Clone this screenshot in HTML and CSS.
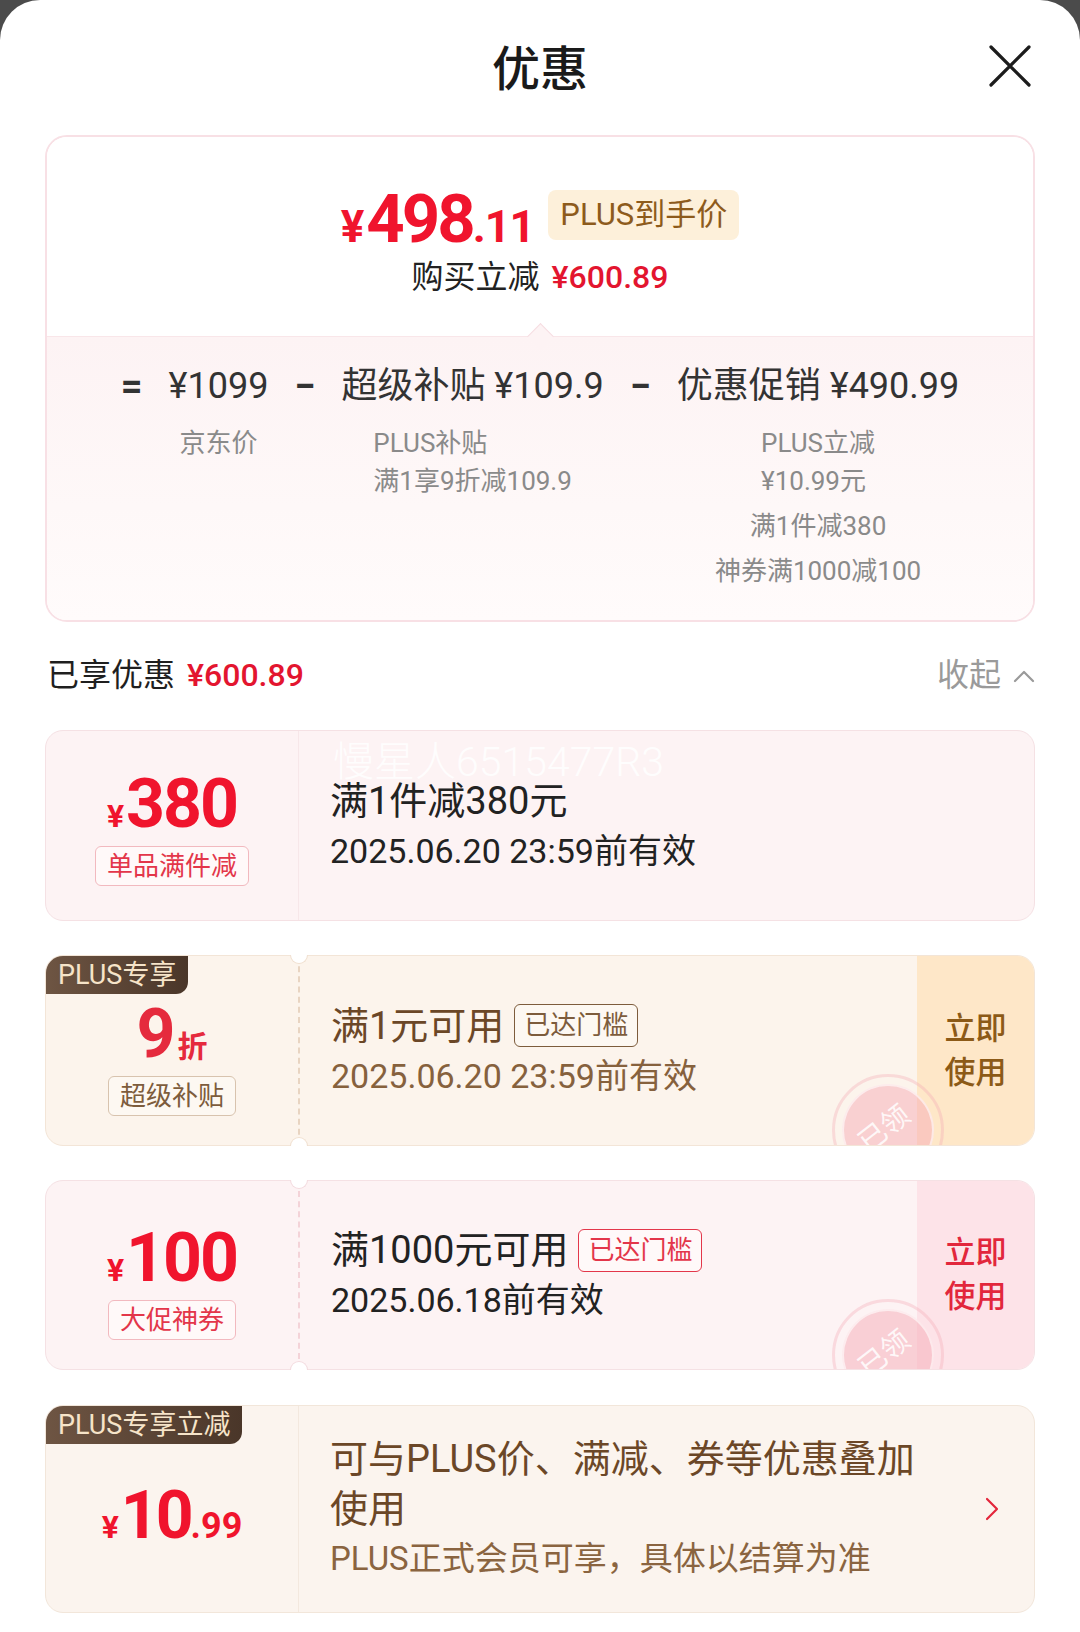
FILE: index.html
```html
<!DOCTYPE html>
<html lang="zh-CN">
<head>
<meta charset="utf-8">
<title>优惠</title>
<link rel="stylesheet" href="styles.css">
</head>
<body>
<div class="sheet">
  <header class="header">
    <div class="header-title">优惠</div>
    <button class="close" aria-label="关闭">
      <svg width="44" height="44" viewBox="0 0 44 44"><path d="M3 3L41 41M41 3L3 41" stroke="#1c1c1c" stroke-width="3.2" stroke-linecap="round"/></svg>
    </button>
  </header>

  <section class="summary">
    <div class="summary-top">
      <div class="final-row">
        <span class="final-price"><span class="fp-yen">¥</span><span class="fp-int">498</span><span class="fp-dec">.11</span></span>
        <span class="plus-badge">PLUS到手价</span>
      </div>
      <div class="save-row">购买立减<span class="save-amt">¥600.89</span></div>
    </div>
    <div class="summary-bottom">
      <div class="formula">
        <div class="op">=</div>
        <div class="term">
          <div class="term-main">¥1099</div>
          <div class="term-sub">
            <div class="sub-item">京东价</div>
          </div>
        </div>
        <div class="op">−</div>
        <div class="term">
          <div class="term-main">超级补贴 ¥109.9</div>
          <div class="term-sub">
            <div class="sub-item">PLUS补贴<br>满1享9折减109.9</div>
          </div>
        </div>
        <div class="op">−</div>
        <div class="term">
          <div class="term-main">优惠促销 ¥490.99</div>
          <div class="term-sub">
            <div class="sub-item">PLUS立减<br>¥10.99元</div>
            <div class="sub-item">满1件减380</div>
            <div class="sub-item">神券满1000减100</div>
          </div>
        </div>
      </div>
    </div>
  </section>

  <div class="enjoyed">
    <div class="enjoyed-left">已享优惠<span class="enjoyed-amt">¥600.89</span></div>
    <div class="collapse">收起
      <svg width="22" height="14" viewBox="0 0 22 14"><polyline points="2,12 11,3 20,12" fill="none" stroke="#9a9a9a" stroke-width="2.2" stroke-linecap="round" stroke-linejoin="round"/></svg>
    </div>
  </div>

  <div class="coupon-list">
    <div class="coupon coupon-pink h191">
      <div class="coupon-clip">
        <div class="cp-left pad-4">
          <div class="cp-amount red"><span class="cp-yen">¥</span><span class="cp-num">380</span></div>
          <div class="cp-tag tag-red">单品满件减</div>
        </div>
        <div class="cp-body div-faint-pink">
          <div class="cp-title">满1件减380元</div>
          <div class="cp-date">2025.06.20 23:59前有效</div>
        </div>
        <div class="watermark">慢星人6515477R3</div>
      </div>
    </div>

    <div class="coupon coupon-cream h191">
      <div class="coupon-clip">
        <div class="corner-badge">PLUS专享</div>
        <div class="cp-left pad-12">
          <div class="cp-amount discount"><span class="cp-num">9</span><span class="cp-unit">折</span></div>
          <div class="cp-tag tag-brown">超级补贴</div>
        </div>
        <div class="cp-body div-brown">
          <div class="cp-title brown-title">满1元可用<span class="title-tag tag-brown">已达门槛</span></div>
          <div class="cp-date brown-date">2025.06.20 23:59前有效</div>
        </div>
        <div class="cp-action action-gold">立即<br>使用</div>
        <div class="stamp"><span class="stamp-text">已领</span></div>
      </div>
      <span class="notch notch-top notch-brown"></span>
      <span class="notch notch-bottom notch-brown"></span>
    </div>

    <div class="coupon coupon-pink h190">
      <div class="coupon-clip">
        <div class="cp-left pad-12">
          <div class="cp-amount red"><span class="cp-yen">¥</span><span class="cp-num">100</span></div>
          <div class="cp-tag tag-red">大促神券</div>
        </div>
        <div class="cp-body div-pink">
          <div class="cp-title">满1000元可用<span class="title-tag tag-red">已达门槛</span></div>
          <div class="cp-date">2025.06.18前有效</div>
        </div>
        <div class="cp-action action-red">立即<br>使用</div>
        <div class="stamp"><span class="stamp-text">已领</span></div>
      </div>
      <span class="notch notch-top notch-pink"></span>
      <span class="notch notch-bottom notch-pink"></span>
    </div>

    <div class="coupon coupon-cream2 h208">
      <div class="coupon-clip">
        <div class="corner-badge">PLUS专享立减</div>
        <div class="cp-left pad-20">
          <div class="cp-amount red"><span class="cp-yen">¥</span><span class="cp-num num-sm">10</span><span class="cp-dec">.99</span></div>
        </div>
        <div class="cp-body div-faint-cream">
          <div class="cp-title brown-title wrap-title">可与PLUS价、满减、券等优惠叠加使用</div>
          <div class="cp-date brown-sub">PLUS正式会员可享，具体以结算为准</div>
        </div>
        <div class="cp-arrow">
          <svg width="14" height="24" viewBox="0 0 14 24"><polyline points="2,2 12,12 2,22" fill="none" stroke="#e3263b" stroke-width="2.2" stroke-linecap="round" stroke-linejoin="round"/></svg>
        </div>
      </div>
    </div>
  </div>
</div>
</body>
</html>
```

FILE: styles.css
```css
* { box-sizing: border-box; margin: 0; padding: 0; }
html { background: #4b4b4b; }
body {
  margin: 0;
  width: 1080px;
  height: 1632px;
  overflow: hidden;
  font-family: Roboto, "Noto Sans CJK SC", sans-serif;
  color: #222;
}
.sheet {
  background: #fff;
  border-radius: 40px 40px 0 0;
  height: 1632px;
  padding: 0 45px;
}

/* header */
.header {
  height: 135px;
  display: grid;
  grid-template-columns: 1fr auto 1fr;
  align-items: center;
}
.header-title {
  grid-column: 2;
  font-family: "Noto Sans CJK SC", sans-serif;
  font-size: 48px;
  font-weight: 500;
  color: #1a1a1a;
  line-height: 1;
  margin-top: -6px;
}
.close {
  grid-column: 3;
  justify-self: end;
  background: none;
  border: 0;
  width: 44px;
  height: 44px;
  margin-right: 3px;
  margin-top: -3px;
  display: flex;
}

/* summary card */
.summary {
  border: 2px solid #f8e0e5;
  border-radius: 22px;
  height: 487px;
  overflow: hidden;
  display: flex;
  flex-direction: column;
}
.summary-top {
  height: 199px;
  flex: none;
  padding-top: 46px;
  display: flex;
  flex-direction: column;
  align-items: center;
  background: #fff;
}
.final-row {
  height: 64px;
  display: flex;
  align-items: center;
  gap: 14px;
}
.final-price {
  display: flex;
  align-items: baseline;
  color: #f0142d;
  font-weight: 700;
  line-height: 1;
  white-space: nowrap;
  margin-top: 8px;
}
.fp-yen { font-size: 44px; margin-right: 2px; }
.fp-int { font-size: 67px; letter-spacing: -3px; }
.fp-dec { font-size: 45px; letter-spacing: -1px; }
.plus-badge {
  height: 50px;
  line-height: 50px;
  padding: 0 12px;
  border-radius: 8px;
  background: #fdf0da;
  color: #8d5b1c;
  font-size: 31px;
}
.save-row {
  margin-top: 10px;
  font-size: 32px;
  line-height: 40px;
  color: #222;
}
.save-amt {
  color: #e3152f;
  font-weight: 500;
  margin-left: 12px;
}

.summary-bottom {
  flex: 1;
  position: relative;
  border-top: 1px solid #f9e6e9;
  background: linear-gradient(180deg, #fdf3f4 0%, #fef8f8 60%, #fffbfb 100%);
}
.summary-bottom::before {
  content: "";
  position: absolute;
  left: calc(50% - 9px);
  top: -10px;
  width: 18px;
  height: 18px;
  background: #fdf3f4;
  border-left: 1px solid #f6dde2;
  border-top: 1px solid #f6dde2;
  transform: rotate(45deg);
}
.formula {
  display: flex;
  justify-content: center;
  gap: 26px;
  padding-top: 27px;
}
.op, .term-main {
  font-size: 35px;
  line-height: 44px;
  font-weight: 400;
  color: #333;
  white-space: nowrap;
}
.op { font-weight: 700; font-size: 38px; }
.term {
  display: flex;
  flex-direction: column;
  align-items: center;
}
.term-main { font-size: 36px; }
.term-sub {
  margin-top: 16px;
  display: flex;
  flex-direction: column;
  align-items: center;
  gap: 7px;
}
.sub-item {
  font-size: 26px;
  line-height: 38px;
  color: #8a8a8a;
  text-align: left;
  white-space: nowrap;
}

/* enjoyed row */
.enjoyed {
  height: 108px;
  padding-bottom: 8px;
  display: flex;
  align-items: center;
  justify-content: space-between;
}
.enjoyed-left {
  font-size: 32px;
  color: #1f1f1f;
  padding-left: 2px;
}
.enjoyed-amt {
  color: #e3152f;
  font-weight: 500;
  margin-left: 12px;
}
.collapse {
  display: flex;
  align-items: center;
  gap: 12px;
  font-size: 32px;
  color: #9a9a9a;
}
.collapse svg { margin-top: 8px; }

/* coupons */
.coupon-list {
  display: flex;
  flex-direction: column;
  gap: 34px;
}
.coupon {
  position: relative;
  border: 1px solid #f5e0e3;
  border-radius: 18px;
}
.h191 { height: 191px; }
.h190 { height: 190px; }
.h208 { height: 208px; margin-top: 1px; }
.coupon-pink { background: #fdf3f4; border-color: #f5e1e4; }
.coupon-cream { background: #fcf4ec; border-color: #f3e5d7; }
.coupon-cream2 { background: #fbf4ee; border-color: #f2e6da; }
.coupon-clip {
  position: relative;
  display: flex;
  height: 100%;
  border-radius: 17px;
  overflow: hidden;
}
.cp-left {
  width: 252px;
  flex: none;
  display: flex;
  flex-direction: column;
  align-items: center;
  justify-content: center;
}
.pad-4 { padding-top: 4px; }
.pad-12 { padding-top: 14px; }
.pad-20 { padding-top: 14px; }
.cp-amount {
  display: flex;
  align-items: baseline;
  font-weight: 700;
  line-height: 1;
  white-space: nowrap;
}
.red { color: #f0142d; }
.cp-yen { font-size: 32px; margin-right: 2px; }
.cp-num { font-size: 68px; letter-spacing: -2px; }
.cp-num.num-sm { font-size: 66px; letter-spacing: -3px; }
.cp-dec { font-size: 36px; }
.discount { color: #e52a3d; }
.discount .cp-num { font-size: 68px; }
.cp-unit { font-size: 30px; margin-left: 4px; }
.cp-tag {
  margin-top: 8px;
  font-size: 26px;
  line-height: 38px;
  padding: 0 11px;
  border: 1px solid;
  border-radius: 6px;
}
.tag-red { color: #e3364a; border-color: #f2b9bf; background: #fff9f9; }
.tag-brown { color: #7d5c3c; border-color: #d8c3ae; background: #fdf8f2; }

.cp-body {
  flex: 1;
  min-width: 0;
  display: flex;
  flex-direction: column;
  justify-content: center;
  padding-left: 31px;
  border-left: 2px dashed #f5e3e5;
}
.div-faint-pink { border-left: 1px solid #f7e7e9; }
.div-pink { border-left-color: #f4d3d8; }
.div-brown { border-left-color: #e8d4c1; }
.div-faint-cream { border-left: 1px solid #f3e8de; }
.cp-title {
  font-size: 38px;
  line-height: 50px;
  color: #222;
  display: flex;
  align-items: center;
}
.wrap-title { display: block; max-width: 600px; }
.cp-date {
  font-size: 34px;
  line-height: 50px;
  color: #222;
  white-space: nowrap;
}
.brown-title { color: #6b4727; }
.brown-date { color: #86613d; }
.brown-sub { color: #8a6440; font-size: 33px; }
.title-tag {
  margin-left: 10px;
  font-size: 26px;
  line-height: 41px;
  padding: 0 9px;
  border: 1px solid;
  border-radius: 6px;
}

.cp-action {
  width: 117px;
  flex: none;
  display: flex;
  align-items: center;
  justify-content: center;
  text-align: center;
  font-size: 31px;
  line-height: 44px;
  font-weight: 500;
}
.action-gold { background: #fee7c8; color: #8c5a17; }
.action-red { background: #fde3e8; color: #e2273c; }
.cp-arrow {
  width: 84px;
  flex: none;
  display: flex;
  align-items: center;
  justify-content: center;
}

.corner-badge {
  position: absolute;
  left: 0;
  top: 0;
  height: 38px;
  line-height: 38px;
  padding: 0 12px;
  font-size: 27px;
  font-weight: 400;
  color: #f6e4c9;
  background: linear-gradient(90deg, #6e5543 0%, #4a3629 100%);
  border-bottom-right-radius: 12px;
  z-index: 2;
}

.watermark {
  position: absolute;
  left: 287px;
  top: 6px;
  font-size: 41px;
  line-height: 50px;
  font-weight: 300;
  color: rgba(255, 255, 255, 0.85);
  white-space: nowrap;
}

.stamp {
  position: absolute;
  left: 786px;
  top: 118px;
  width: 112px;
  height: 112px;
  border-radius: 50%;
  border: 3px solid rgba(244, 170, 180, 0.35);
  display: flex;
  align-items: center;
  justify-content: center;
}
.stamp::before {
  content: "";
  position: absolute;
  inset: 7px;
  border-radius: 50%;
  background: rgba(246, 172, 182, 0.5);
  border: 2px solid rgba(255, 255, 255, 0.6);
}
.stamp-text {
  position: relative;
  font-size: 28px;
  color: rgba(255, 255, 255, 0.85);
  transform: rotate(-38deg) translate(-2px, -6px);
}

.notch {
  position: absolute;
  left: 244px;
  width: 18px;
  height: 9px;
  background: #fff;
  border: 1px solid;
  z-index: 3;
}
.notch-top {
  top: -1px;
  border-top: 0;
  border-radius: 0 0 9px 9px;
}
.notch-bottom {
  bottom: -1px;
  border-bottom: 0;
  border-radius: 9px 9px 0 0;
}
.notch-brown { border-color: #f0dfcf; }
.notch-pink { border-color: #f3dade; }
```
